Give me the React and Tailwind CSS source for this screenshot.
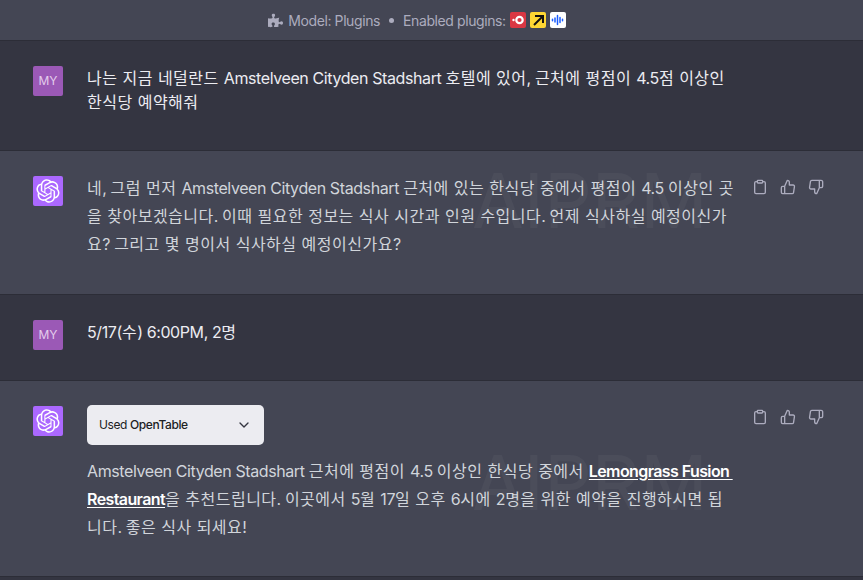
import React from 'react'
import { FaPuzzlePiece } from 'react-icons/fa'
import { FiChevronDown, FiClipboard, FiThumbsUp, FiThumbsDown } from 'react-icons/fi'

const font = "font-['Inter','Noto_Sans_CJK_KR',sans-serif]"

// hangul runs are set wider than the latin around them
function Ko({ text }) {
    const parts = text.split(/([\uAC00-\uD7A3][\uAC00-\uD7A3 ]*)/)
    return parts.map((part, i) =>
        i % 2 === 1 ? (
            <span key={i} className="tracking-[0.5px]">{part}</span>
        ) : (
            part
        )
    )
}

function GptLogo() {
    return (
        <div className="w-[30px] h-[30px] rounded-[2px] bg-[#ab68ff] flex items-center justify-center shrink-0">
            <svg width="24" height="24" viewBox="0 0 41 41" fill="none">
                <path
                    fill="#fff"
                    d="M37.5324 16.8707C37.9808 15.5241 38.1363 14.0974 37.9886 12.6859C37.8409 11.2744 37.3934 9.91076 36.676 8.68622C35.6126 6.83404 33.9882 5.3676 32.0373 4.4985C30.0864 3.62941 27.9098 3.40259 25.8215 3.85078C24.8796 2.7893 23.7219 1.94125 22.4257 1.36341C21.1295 0.785575 19.7249 0.491269 18.3058 0.500197C16.1708 0.495044 14.0893 1.16803 12.3614 2.42214C10.6335 3.67624 9.34853 5.44666 8.6917 7.47815C7.30085 7.76286 5.98686 8.3414 4.8377 9.17505C3.68854 10.0087 2.73073 11.0782 2.02839 12.312C0.956464 14.1591 0.498905 16.2988 0.721698 18.4228C0.944492 20.5467 1.83612 22.5449 3.268 24.1293C2.81966 25.4759 2.66413 26.9026 2.81182 28.3141C2.95951 29.7256 3.40701 31.0892 4.12437 32.3138C5.18791 34.1659 6.8123 35.6322 8.76321 36.5013C10.7141 37.3704 12.8907 37.5973 14.9789 37.1492C15.9208 38.2107 17.0786 39.0587 18.3747 39.6366C19.6709 40.2144 21.0755 40.5087 22.4946 40.4998C24.6307 40.5054 26.7133 39.8321 28.4418 38.5772C30.1704 37.3223 31.4556 35.5506 32.1119 33.5179C33.5027 33.2332 34.8167 32.6547 35.9659 31.821C37.115 30.9874 38.0728 29.9178 38.7752 28.684C39.8458 26.8371 40.3023 24.6979 40.0789 22.5748C39.8556 20.4517 38.9639 18.4544 37.5324 16.8707ZM22.4978 37.8849C20.7443 37.8874 19.0459 37.2733 17.6994 36.1501C17.7601 36.117 17.8666 36.0586 17.936 36.0161L25.9004 31.4156C26.1003 31.3019 26.2663 31.137 26.3813 30.9378C26.4964 30.7386 26.5563 30.5124 26.5549 30.2825V19.0542L29.9213 20.998C29.9389 21.0068 29.9541 21.0198 29.9656 21.0359C29.977 21.052 29.9842 21.0707 29.9867 21.0902V30.3889C29.9842 32.375 29.1946 34.2791 27.7909 35.6841C26.3872 37.0892 24.4838 37.8806 22.4978 37.8849ZM6.39227 31.0064C5.51397 29.4888 5.19742 27.7107 5.49804 25.9832C5.55718 26.0187 5.66048 26.0818 5.73461 26.1244L13.699 30.7248C13.8975 30.8408 14.1233 30.902 14.3532 30.902C14.583 30.902 14.8088 30.8408 15.0073 30.7248L24.731 25.1103V28.9979C24.7321 29.0177 24.7283 29.0376 24.7199 29.0556C24.7115 29.0736 24.6988 29.0893 24.6829 29.1012L16.6317 33.7497C14.9096 34.7416 12.8643 35.0097 10.9447 34.4954C9.02506 33.9811 7.38785 32.7263 6.39227 31.0064ZM4.29707 13.6194C5.17156 12.0998 6.55279 10.9364 8.19885 10.3327C8.19885 10.4013 8.19491 10.5228 8.19491 10.6071V19.808C8.19351 20.0378 8.25334 20.2638 8.36823 20.4629C8.48312 20.6619 8.64893 20.8267 8.84863 20.9404L18.5723 26.5542L15.206 28.4979C15.1894 28.5089 15.1703 28.5155 15.1505 28.5173C15.1307 28.5191 15.1107 28.516 15.0924 28.5082L7.04046 23.8557C5.32135 22.8601 4.06716 21.2235 3.55289 19.3046C3.03862 17.3858 3.30624 15.3413 4.29707 13.6194ZM31.955 20.0556L22.2312 14.4411L25.5976 12.4981C25.6142 12.4872 25.6333 12.4805 25.6531 12.4787C25.6729 12.4769 25.6928 12.4801 25.7111 12.4879L33.7631 17.1364C34.9967 17.849 36.0017 18.8982 36.6606 20.1613C37.3194 21.4244 37.6047 22.849 37.4832 24.2684C37.3617 25.6878 36.8382 27.0432 35.9743 28.1759C35.1103 29.3086 33.9415 30.1717 32.6047 30.6641C32.6047 30.5947 32.6047 30.4733 32.6047 30.3889V21.188C32.6066 20.9586 32.5474 20.7328 32.4332 20.5338C32.319 20.3348 32.154 20.1698 31.955 20.0556ZM35.3055 15.0128C35.2464 14.9765 35.1431 14.9142 35.069 14.8717L27.1045 10.2712C26.906 10.1554 26.6803 10.0943 26.4504 10.0943C26.2206 10.0943 25.9948 10.1554 25.7963 10.2712L16.0726 15.8858V11.9982C16.0715 11.9783 16.0753 11.9585 16.0837 11.9405C16.0921 11.9225 16.1048 11.9068 16.1207 11.8949L24.1719 7.25025C25.4053 6.53903 26.8158 6.19376 28.2383 6.25482C29.6608 6.31589 31.0364 6.78077 32.2044 7.59508C33.3723 8.40939 34.2842 9.53945 34.8334 10.8531C35.3826 12.1667 35.5464 13.6095 35.3055 15.0128ZM14.2424 21.9419L10.8752 19.9981C10.8576 19.9893 10.8423 19.9763 10.8309 19.9602C10.8195 19.9441 10.8122 19.9254 10.8098 19.9058V10.6071C10.8107 9.18295 11.2173 7.78848 11.9819 6.58696C12.7466 5.38544 13.8377 4.42659 15.1275 3.82264C16.4173 3.21869 17.8524 2.99464 19.2649 3.1767C20.6775 3.35876 22.0089 3.93941 23.1034 4.85067C23.0427 4.88379 22.937 4.94215 22.8668 4.98473L14.9024 9.58517C14.7025 9.69878 14.5366 9.86356 14.4215 10.0626C14.3065 10.2616 14.2466 10.4877 14.2479 10.7175L14.2424 21.9419ZM16.071 17.9991L20.4018 15.4978L24.7325 17.9975V22.9985L20.4018 25.4983L16.071 22.9985V17.9991Z"
                />
            </svg>
        </div>
    )
}

function UserAvatar() {
    return (
        <div className="w-[30px] h-[30px] rounded-[2px] bg-[#9b59b6] flex items-center justify-center shrink-0 text-[12px] text-[#e4cdec]">
            MY
        </div>
    )
}

function Actions() {
    return (
        <div className="absolute right-[39px] top-[28px] flex gap-3 text-[#acacbe]">
            <FiClipboard size={16} />
            <FiThumbsUp size={16} />
            <FiThumbsDown size={16} />
        </div>
    )
}

function Watermark({ top }) {
    return (
        <div className={`absolute left-[472px] ${top} text-[75px] leading-none text-white/[0.04] select-none`}>
            AIPRM
        </div>
    )
}

function UserRow({ children, pb }) {
    return (
        <div className={`flex gap-6 pl-[33px] pt-[25px] ${pb} bg-[#343541] border-b border-[#2c2d37]`}>
            <UserAvatar />
            <div className="w-[649px] leading-[24px] tracking-[-0.4px] text-[#ececf1]">{children}</div>
        </div>
    )
}

function BotRow({ children, pb, watermarkTop }) {
    return (
        <div className={`relative flex gap-6 pl-[33px] pt-[25px] ${pb} bg-[#444654] border-b border-[#2c2d37]`}>
            <GptLogo />
            <div className="w-[649px] leading-[28px] tracking-[-0.4px] text-[#d1d5db]">{children}</div>
            <Watermark top={watermarkTop} />
            <Actions />
        </div>
    )
}

export default function App() {
    return (
        <div className={`min-h-screen bg-[#343541] text-[16px] ${font}`}>
            <div className="h-[41px] flex items-center justify-center gap-1 pr-[29px] bg-[#444654] border-b border-[#2c2d37] text-[14px] tracking-[-0.4px] text-[#acacbe]">
                <FaPuzzlePiece size={15} className="mr-px" />
                <span>Model: Plugins</span>
                <div className="w-[5px] h-[5px] mx-[5px] rounded-full bg-[#acacbe]" />
                <span>Enabled plugins:</span>
                <div className="flex gap-1">
                    <div className="w-4 h-4 rounded-[2px] bg-[#da3743] flex items-center justify-center">
                        <svg width="14" height="14" viewBox="0 0 14 14">
                            <circle cx="8.5" cy="7" r="3.2" fill="none" stroke="#fff" strokeWidth="2.2" />
                            <circle cx="2.5" cy="7" r="1.2" fill="#fff" />
                        </svg>
                    </div>
                    <div className="w-4 h-4 rounded-[2px] bg-[#ffd733] flex items-center justify-center">
                        <svg width="14" height="14" viewBox="0 0 14 14" fill="none" stroke="#14110f" strokeWidth="2">
                            <path d="M4 3h8v7" />
                            <path d="M11.5 3.5L3 12" />
                        </svg>
                    </div>
                    <div className="w-4 h-4 rounded-[2px] bg-white flex items-center justify-center">
                        <svg width="14" height="14" viewBox="0 0 14 14" stroke="#1a5cff" strokeWidth="1.5" strokeLinecap="round">
                            <path d="M1.5 6.2v1.6M4 5v4M6.5 2.5v9M9 4.5v5M11.5 6.2v1.6" />
                        </svg>
                    </div>
                </div>
            </div>

            <UserRow pb="pb-9">
                <Ko text="나는 지금 네덜란드 Amstelveen Cityden Stadshart 호텔에 있어, 근처에 평점이 4.5점 이상인 한식당 예약해줘" />
            </UserRow>

            <BotRow pb="pb-9" watermarkTop="top-[12px]">
                <p className="-mt-[2px]">
                    <Ko text="네, 그럼 먼저 Amstelveen Cityden Stadshart 근처에 있는 한식당 중에서 평점이 4.5 이상인 곳을 찾아보겠습니다. 이때 필요한 정보는 식사 시간과 인원 수입니다. 언제 식사하실 예정이신가요? 그리고 몇 명이서 식사하실 예정이신가요?" />
                </p>
            </BotRow>

            <UserRow pb="pb-[30px]">
                <Ko text="5/17(수) 6:00PM, 2명" />
            </UserRow>

            <BotRow pb="pb-[35px]" watermarkTop="top-[64px]">
                <div className="flex flex-col">
                    <div className="-mt-px w-[177px] h-10 rounded-[5px] bg-[#ececf1] flex items-center justify-between pl-3 pr-[12px] text-[12px] text-[#202123]">
                        <span>Used <span className="font-medium">OpenTable</span></span>
                        <FiChevronDown size={16} className="text-[#343541]" />
                    </div>
                    <p className="mt-3">
                        <Ko text="Amstelveen Cityden Stadshart 근처에 평점이 4.5 이상인 한식당 중에서 " />
                        <a className="font-semibold tracking-[-0.6px] text-white underline underline-offset-2">Lemongrass Fusion&nbsp;<wbr />Restaurant</a>
                        <Ko text="을 추천드립니다. 이곳에서 5월 17일 오후 6시에 2명을 위한 예약을 진행하시면 됩니다. 좋은 식사 되세요!" />
                    </p>
                </div>
            </BotRow>
        </div>
    )
}
